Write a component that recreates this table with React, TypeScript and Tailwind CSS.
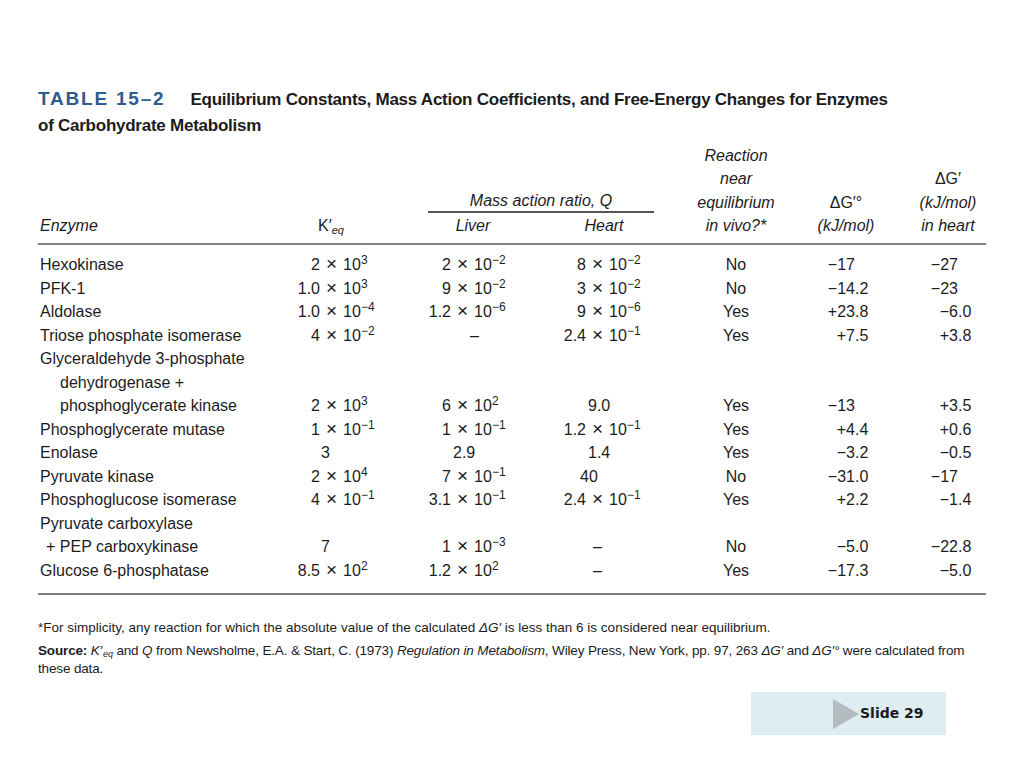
import React from 'react';

type Val = { m: string; e?: string; c?: string };
type Row = {
  name: string[];
  keq: Val;
  liver: Val;
  heart: Val;
  eq: string;
  dg0: string;
  dg: string;
};

const rows: Row[] = [
  { name: ['Hexokinase'], keq: { m: '2', e: '3' }, liver: { m: '2', e: '−2' }, heart: { m: '8', e: '−2' }, eq: 'No', dg0: '−17', dg: '−27' },
  { name: ['PFK-1'], keq: { m: '1.0', e: '3' }, liver: { m: '9', e: '−2' }, heart: { m: '3', e: '−2' }, eq: 'No', dg0: '−14.2', dg: '−23' },
  { name: ['Aldolase'], keq: { m: '1.0', e: '−4' }, liver: { m: '1.2', e: '−6' }, heart: { m: '9', e: '−6' }, eq: 'Yes', dg0: '+23.8', dg: '−6.0' },
  { name: ['Triose phosphate isomerase'], keq: { m: '4', e: '−2' }, liver: { m: '–', c: 'pl-[62px]' }, heart: { m: '2.4', e: '−1' }, eq: 'Yes', dg0: '+7.5', dg: '+3.8' },
  {
    name: ['Glyceraldehyde 3-phosphate', 'dehydrogenase +', 'phosphoglycerate kinase'],
    keq: { m: '2', e: '3' }, liver: { m: '6', e: '2' }, heart: { m: '9.0', c: 'pl-[50px]' }, eq: 'Yes', dg0: '−13', dg: '+3.5',
  },
  { name: ['Phosphoglycerate mutase'], keq: { m: '1', e: '−1' }, liver: { m: '1', e: '−1' }, heart: { m: '1.2', e: '−1' }, eq: 'Yes', dg0: '+4.4', dg: '+0.6' },
  { name: ['Enolase'], keq: { m: '3', c: 'pl-[33px]' }, liver: { m: '2.9', c: 'pl-[45px]' }, heart: { m: '1.4', c: 'pl-[50px]' }, eq: 'Yes', dg0: '−3.2', dg: '−0.5' },
  { name: ['Pyruvate kinase'], keq: { m: '2', e: '4' }, liver: { m: '7', e: '−1' }, heart: { m: '40', c: 'pl-[42px]' }, eq: 'No', dg0: '−31.0', dg: '−17' },
  { name: ['Phosphoglucose isomerase'], keq: { m: '4', e: '−1' }, liver: { m: '3.1', e: '−1' }, heart: { m: '2.4', e: '−1' }, eq: 'Yes', dg0: '+2.2', dg: '−1.4' },
  {
    name: ['Pyruvate carboxylase', '+ PEP carboxykinase'],
    keq: { m: '7', c: 'pl-[33px]' }, liver: { m: '1', e: '−3' }, heart: { m: '–', c: 'pl-[55px]' }, eq: 'No', dg0: '−5.0', dg: '−22.8',
  },
  { name: ['Glucose 6-phosphatase'], keq: { m: '8.5', e: '2' }, liver: { m: '1.2', e: '2' }, heart: { m: '–', c: 'pl-[55px]' }, eq: 'Yes', dg0: '−17.3', dg: '−5.0' },
];

const grid = 'grid grid-cols-[250px_120px_130px_142px_112px_100px_94px]';

function Sci({ v, box }: { v: Val; box: string }) {
  if (!v.e) return <div className={`self-end ${v.c ?? ''}`}>{v.m}</div>;
  return (
    <div className="self-end flex items-baseline">
      <span className={`${box} text-right`}>{v.m}</span>
      <span className="mx-[6px] text-[19px] leading-none">×</span>
      <span>
        10<sup>{v.e}</sup>
      </span>
    </div>
  );
}

function Dec({ v, box }: { v: string; box: string }) {
  const i = v.indexOf('.');
  const whole = i < 0 ? v : v.slice(0, i);
  const frac = i < 0 ? '' : v.slice(i);
  return (
    <div className="self-end flex">
      <span className={`${box} text-right`}>{whole}</span>
      <span>{frac}</span>
    </div>
  );
}

export default function App() {
  return (
    <div className="w-[1024px] h-[768px] bg-white text-[#1c1c1c] font-['Liberation_Sans',Arial,sans-serif] pl-[38px] pt-[86px]">
      {/* title */}
      <div className="text-[17px] leading-[26px] font-bold tracking-[-0.25px]">
        <span className="text-[19px] tracking-[1.8px] text-[#2d5d8e] mr-[25px]">TABLE 15–2</span>
        Equilibrium Constants, Mass Action Coefficients, and Free-Energy Changes for Enzymes
        <br />
        of Carbohydrate Metabolism
      </div>

      <div className="w-[948px] mt-[5px]">
        {/* header */}
        <div className={`${grid} italic text-[16px] leading-[23.3px] pb-[6px] border-b-[2px] border-[#808080]`}>
          <div className="self-end pl-[2px]">Enzyme</div>
          <div className="self-end pl-[30px] not-italic">
            K′<sub className="italic text-[11px]">eq</sub>
          </div>
          <div className="col-span-2 self-end flex flex-col">
            <div className="ml-[20px] mr-[26px] text-center border-b-[2px] border-[#555] leading-[21px] mb-[1px]">Mass action ratio, Q</div>
            <div className="flex">
              <div className="w-[130px] text-center">Liver</div>
              <div className="w-[142px] text-center pr-[10px]">Heart</div>
            </div>
          </div>
          <div className="self-end text-center">
            <div>Reaction</div>
            <div>near</div>
            <div>equilibrium</div>
            <div>in vivo?*</div>
          </div>
          <div className="self-end text-center pl-[8px]">
            <div className="not-italic">ΔG′°</div>
            <div>(kJ/mol)</div>
          </div>
          <div className="self-end text-center pl-[18px]">
            <div className="not-italic">ΔG′</div>
            <div>(kJ/mol)</div>
            <div>in heart</div>
          </div>
        </div>

        {/* body */}
        <div className="pt-[8px] pb-[11px] border-b-[2px] border-[#808080] text-[16px] leading-[23.5px]">
          {rows.map((r, idx) => (
            <div key={idx} className={grid}>
              <div className="pl-[2px]">
                {r.name.map((n, j) => (
                  <div key={j} className={j === 0 ? '' : n.startsWith('+') ? 'pl-[6px]' : 'pl-[20px]'}>
                    {n}
                  </div>
                ))}
              </div>
              <Sci v={r.keq} box="w-[32px]" />
              <Sci v={r.liver} box="w-[43px]" />
              <Sci v={r.heart} box="w-[48px]" />
              <div className="self-end text-center">{r.eq}</div>
              <Dec v={r.dg0} box="w-[63px]" />
              <Dec v={r.dg} box="w-[66px]" />
            </div>
          ))}
        </div>

        {/* notes */}
        <div className="text-[13.5px] leading-[18px] pt-[24px]">
          <p>*For simplicity, any reaction for which the absolute value of the calculated <i>ΔG′</i> is less than 6 is considered near equilibrium.</p>
          <p className="mt-[5px] tracking-[-0.15px]">
            <b>Source:</b> <i>K′</i>
            <sub className="italic text-[9px] ml-[1px]">eq</sub> and <i>Q</i> from Newsholme, E.A. &amp; Start, C. (1973) <i>Regulation in Metabolism</i>, Wiley Press, New York, pp. 97, 263 <i>ΔG′</i> and <i>ΔG′°</i> were calculated from these data.
          </p>
        </div>
      </div>

      {/* slide badge */}
      <div className="flex justify-end w-[908px] mt-[14px]">
        <div className="w-[195px] h-[43px] bg-[#ddedf2] flex items-center pl-[82px]">
          <svg width="26" height="30" viewBox="0 0 26 30" className="shrink-0">
            <polygon points="0,0 26,15 0,30" fill="#b3bbbe" />
          </svg>
          <span className="font-['DejaVu_Sans',sans-serif] font-bold text-[14px] ml-[1px]">Slide 29</span>
        </div>
      </div>
    </div>
  );
}
